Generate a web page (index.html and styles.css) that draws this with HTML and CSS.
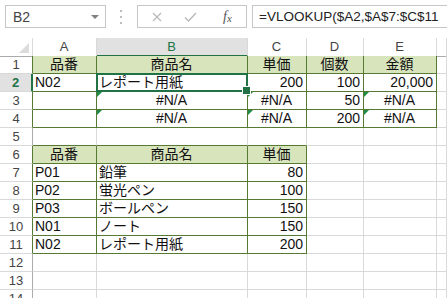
FILE: index.html
```html
<!DOCTYPE html>
<html lang="ja">
<head>
<meta charset="UTF-8" />
<title>VLOOKUP</title>
<link rel="stylesheet" href="styles.css">
</head>
<body>
<div class="fbar">
  <div class="namebox"><span>B2</span><span class="drop"></span></div>
  <div class="dots">
    <svg width="3" height="14" viewBox="0 0 3 14"><rect x="0" y="0" width="2" height="2" fill="#bdbdbd"/><rect x="0" y="6" width="2" height="2" fill="#bdbdbd"/><rect x="0" y="12" width="2" height="2" fill="#bdbdbd"/></svg>
  </div>
  <div class="fxbox">
    <svg class="ic-x" width="10" height="10" viewBox="0 0 10 10"><path d="M1 1L9 9M9 1L1 9" stroke="#b8b8b8" stroke-width="1.2" fill="none"/></svg>
    <svg class="ic-ok" width="13" height="10" viewBox="0 0 13 10"><path d="M1 5.5L4.5 9L12 1" stroke="#b8b8b8" stroke-width="1.3" fill="none"/></svg>
    <span class="fx">f<sub>x</sub></span>
  </div>
  <div class="finput">=VLOOKUP($A2,$A$7:$C$11</div>
</div>

<div class="sheet">
  <div class="row head">
    <div class="c corner"><span class="tri"></span></div>
    <div class="c ch tb">A</div>
    <div class="c ch sel">B</div>
    <div class="c ch tb">C</div>
    <div class="c ch tb">D</div>
    <div class="c ch tb">E</div>
    <div class="c ch"></div>
  </div>
  <div class="row">
    <div class="c rh tl">1</div>
    <div class="c t th">品番</div>
    <div class="c t th">商品名</div>
    <div class="c t th">単価</div>
    <div class="c t th">個数</div>
    <div class="c t th">金額</div>
    <div class="c"></div>
  </div>
  <div class="row">
    <div class="c rh rsel">2</div>
    <div class="c t">N02</div>
    <div class="c t active">レポート用紙</div>
    <div class="c t num">200</div>
    <div class="c t num">100</div>
    <div class="c t num">20,000</div>
    <div class="c"></div>
  </div>
  <div class="row">
    <div class="c rh tl">3</div>
    <div class="c t"></div>
    <div class="c t err">#N/A</div>
    <div class="c t err">#N/A</div>
    <div class="c t num">50</div>
    <div class="c t err">#N/A</div>
    <div class="c"></div>
  </div>
  <div class="row">
    <div class="c rh tl">4</div>
    <div class="c t"></div>
    <div class="c t err">#N/A</div>
    <div class="c t err">#N/A</div>
    <div class="c t num">200</div>
    <div class="c t err">#N/A</div>
    <div class="c"></div>
  </div>
  <div class="row">
    <div class="c rh">5</div>
    <div class="c tb"></div>
    <div class="c tb"></div>
    <div class="c tb"></div>
    <div class="c"></div>
    <div class="c"></div>
    <div class="c"></div>
  </div>
  <div class="row">
    <div class="c rh tl">6</div>
    <div class="c t th">品番</div>
    <div class="c t th">商品名</div>
    <div class="c t th">単価</div>
    <div class="c"></div>
    <div class="c"></div>
    <div class="c"></div>
  </div>
  <div class="row">
    <div class="c rh tl">7</div>
    <div class="c t">P01</div>
    <div class="c t">鉛筆</div>
    <div class="c t num">80</div>
    <div class="c"></div>
    <div class="c"></div>
    <div class="c"></div>
  </div>
  <div class="row">
    <div class="c rh tl">8</div>
    <div class="c t">P02</div>
    <div class="c t">蛍光ペン</div>
    <div class="c t num">100</div>
    <div class="c"></div>
    <div class="c"></div>
    <div class="c"></div>
  </div>
  <div class="row">
    <div class="c rh tl">9</div>
    <div class="c t">P03</div>
    <div class="c t">ボールペン</div>
    <div class="c t num">150</div>
    <div class="c"></div>
    <div class="c"></div>
    <div class="c"></div>
  </div>
  <div class="row">
    <div class="c rh tl">10</div>
    <div class="c t">N01</div>
    <div class="c t">ノート</div>
    <div class="c t num">150</div>
    <div class="c"></div>
    <div class="c"></div>
    <div class="c"></div>
  </div>
  <div class="row">
    <div class="c rh tl">11</div>
    <div class="c t">N02</div>
    <div class="c t">レポート用紙</div>
    <div class="c t num">200</div>
    <div class="c"></div>
    <div class="c"></div>
    <div class="c"></div>
  </div>
  <div class="row">
    <div class="c rh">12</div>
    <div class="c"></div>
    <div class="c"></div>
    <div class="c"></div>
    <div class="c"></div>
    <div class="c"></div>
    <div class="c"></div>
  </div>
  <div class="row">
    <div class="c rh">13</div>
    <div class="c"></div>
    <div class="c"></div>
    <div class="c"></div>
    <div class="c"></div>
    <div class="c"></div>
    <div class="c"></div>
  </div>
  <div class="row">
    <div class="c rh">14</div>
    <div class="c"></div>
    <div class="c"></div>
    <div class="c"></div>
    <div class="c"></div>
    <div class="c"></div>
    <div class="c"></div>
  </div>
</div>
</body>
</html>
```

FILE: styles.css
```css
/* base */
* {
  box-sizing: border-box;
}
html, body {
  height: 298px;
  overflow: hidden;
}
body {
  margin: 0;
  background: #fff;
  font-family: "Liberation Sans", Arial, sans-serif;
  color: #222;
}

/* formula bar */
.fbar {
  display: flex;
  height: 38px;
  padding: 5px 0 0 5px;
}
.namebox {
  width: 101px;
  height: 23px;
  border: 1px solid #c6c6c6;
  display: flex;
  align-items: center;
  justify-content: space-between;
  padding: 0 6px 0 7px;
  font-size: 14px;
  color: #444;
}
.drop {
  width: 0;
  height: 0;
  border-left: 4px solid transparent;
  border-right: 4px solid transparent;
  border-top: 4px solid #808080;
}
.dots {
  width: 31px;
  height: 23px;
  display: flex;
  align-items: center;
  justify-content: center;
}
.fxbox {
  width: 110px;
  height: 23px;
  border: 1px solid #c6c6c6;
  display: flex;
  align-items: center;
  padding-left: 14px;
}
.ic-ok {
  margin-left: 22px;
}
.fx {
  margin-left: 26px;
  font-family: "Liberation Serif", serif;
  font-style: italic;
  font-size: 14px;
  color: #555;
}
.fx sub {
  font-size: 11px;
  vertical-align: -1px;
}
.finput {
  flex: 1;
  margin-left: 5px;
  height: 23px;
  border: 1px solid #c6c6c6;
  border-right: none;
  padding-left: 6px;
  font-size: 13.5px;
  line-height: 21px;
  white-space: nowrap;
  overflow: hidden;
  color: #222;
}

/* sheet grid */
.row {
  display: grid;
  grid-template-columns: 33px 64px 151px 59px 57px 73px 1fr;
  height: 18px;
}
.c {
  border-right: 1px solid #d9d9d9;
  border-bottom: 1px solid #d9d9d9;
  padding: 0 3px 0 2px;
  font-family: "Liberation Sans", "Noto Sans CJK JP", sans-serif;
  font-size: 14px;
  line-height: 17px;
  white-space: nowrap;
  color: #111;
}
.head .c {
  border-bottom-color: #ababab;
  border-right-color: #d9d9d9;
}
.corner {
  display: flex;
  align-items: flex-end;
  justify-content: flex-end;
  padding: 0 3px 3px 0;
}
.tri {
  width: 0;
  height: 0;
  border-left: 10px solid transparent;
  border-bottom: 10px solid #dcdcdc;
}
.ch {
  text-align: center;
  font-family: "Liberation Sans", Arial, sans-serif;
  font-size: 13px;
  color: #444;
}
.head .sel {
  background: #e1e1e1;
  color: #217346;
  border-bottom: 2px solid #217346;
}
.rh {
  text-align: center;
  font-family: "Liberation Sans", Arial, sans-serif;
  font-size: 13px;
  color: #444;
  padding: 0;
  border-right-color: #ababab;
}
.rsel {
  background: #e1e1e1;
  color: #217346;
  font-weight: bold;
  border-right: 2px solid #217346;
}

/* table cells */
.c.t,
.head .c.tb,
.c.tb {
  border-bottom-color: #567a34;
}
.c.t {
  border-right-color: #567a34;
}
.c.tl {
  border-right-color: #567a34;
}
.th {
  background: #d8e4bc;
  text-align: center;
}
.num {
  text-align: right;
}
.err {
  position: relative;
  text-align: center;
}
.err::before {
  content: '';
  position: absolute;
  top: 0;
  left: 0;
  border-top: 5px solid #1e8c45;
  border-right: 5px solid transparent;
}

/* active cell */
.active {
  position: relative;
  z-index: 2;
}
.active::after {
  content: '';
  position: absolute;
  top: -1px;
  left: -1px;
  right: -1px;
  bottom: -1px;
  border: 2px solid #217346;
}
.active::before {
  content: '';
  position: absolute;
  right: -4px;
  bottom: -4px;
  width: 7px;
  height: 7px;
  background: #217346;
  border: 1px solid #fff;
  z-index: 3;
}
```
